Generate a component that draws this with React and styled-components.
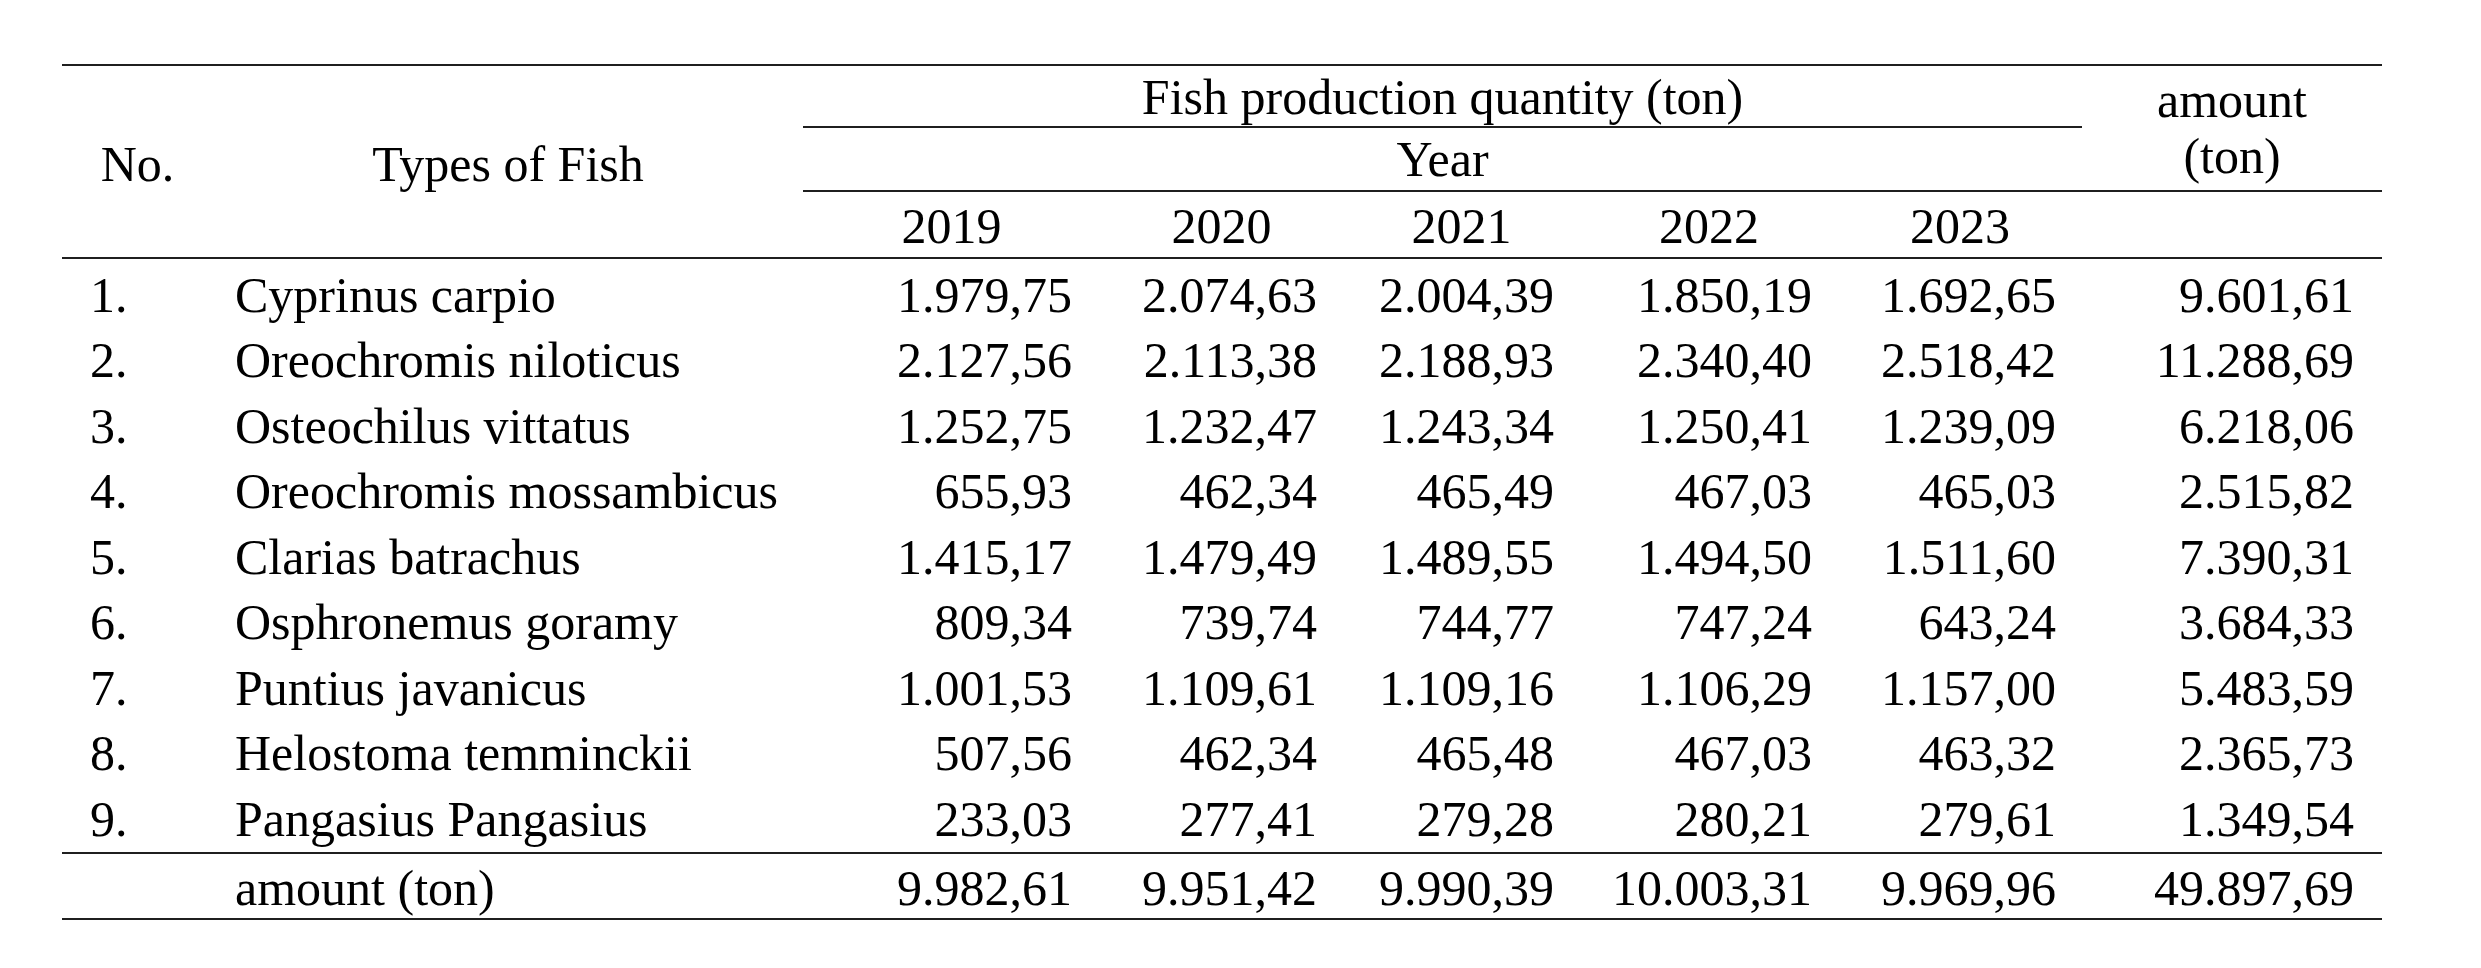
import React from "react";
import styled, { createGlobalStyle } from "styled-components";

const GlobalStyle = createGlobalStyle`
  html, body {
    margin: 0;
    padding: 0;
    background: #ffffff;
  }
  body {
    font-family: "Liberation Serif", "Times New Roman", serif;
    color: #000000;
  }
`;

const Page = styled.div`
  padding: 64px 0 40px 62px;
`;

const Table = styled.table`
  width: 2320px;
  table-layout: fixed;
  border-collapse: separate;
  border-spacing: 0;
  font-family: "Liberation Serif", "Times New Roman", serif;
  font-size: 50px;
  line-height: 56px;
  color: #000;
`;

const HeadRow = styled.tr`
  height: ${(p) => p.$h}px;
`;

const HeadCell = styled.th`
  font-weight: normal;
  text-align: center;
  vertical-align: middle;
  padding: ${(p) => p.$pt || 0}px 0 0 0;
  white-space: nowrap;
  border-top: ${(p) => (p.$top ? "2px solid #1f1f1f" : "none")};
  border-bottom: ${(p) => (p.$bottom ? "2px solid #1f1f1f" : "none")};
`;

const BodyRow = styled.tr`
  height: ${(p) => p.$h}px;
`;

const Cell = styled.td`
  padding: ${(p) => p.$pt || 0}px ${(p) => p.$pr || 0}px 0 ${(p) => p.$pl || 0}px;
  text-align: ${(p) => p.$align || "left"};
  vertical-align: middle;
  white-space: nowrap;
  border-bottom: ${(p) => (p.$bottom ? "2px solid #1f1f1f" : "none")};
`;

const rows = [
  ["1.", "Cyprinus carpio", "1.979,75", "2.074,63", "2.004,39", "1.850,19", "1.692,65", "9.601,61"],
  ["2.", "Oreochromis niloticus", "2.127,56", "2.113,38", "2.188,93", "2.340,40", "2.518,42", "11.288,69"],
  ["3.", "Osteochilus vittatus", "1.252,75", "1.232,47", "1.243,34", "1.250,41", "1.239,09", "6.218,06"],
  ["4.", "Oreochromis mossambicus", "655,93", "462,34", "465,49", "467,03", "465,03", "2.515,82"],
  ["5.", "Clarias batrachus", "1.415,17", "1.479,49", "1.489,55", "1.494,50", "1.511,60", "7.390,31"],
  ["6.", "Osphronemus goramy", "809,34", "739,74", "744,77", "747,24", "643,24", "3.684,33"],
  ["7.", "Puntius javanicus", "1.001,53", "1.109,61", "1.109,16", "1.106,29", "1.157,00", "5.483,59"],
  ["8.", "Helostoma temminckii", "507,56", "462,34", "465,48", "467,03", "463,32", "2.365,73"],
  ["9.", "Pangasius Pangasius", "233,03", "277,41", "279,28", "280,21", "279,61", "1.349,54"],
];

const totals = ["9.982,61", "9.951,42", "9.990,39", "10.003,31", "9.969,96", "49.897,69"];

const widths = [151, 590, 297, 243, 237, 258, 244, 300];
const years = ["2019", "2020", "2021", "2022", "2023"];

function DataRow({ row, first, last }) {
  const pt = first ? 3 : 0;
  return (
    <BodyRow $h={(first ? 68.5 : 65.5) + (last ? 2 : 0)}>
      <Cell $pl={28} $pt={pt} $bottom={last}>{row[0]}</Cell>
      <Cell $pl={22} $pt={pt} $bottom={last}>{row[1]}</Cell>
      {row.slice(2).map((v, i) => (
        <Cell key={i} $align="right" $pr={i === 5 || i === 0 ? 28 : 26} $pt={pt} $bottom={last}>
          {v}
        </Cell>
      ))}
    </BodyRow>
  );
}

export default function App() {
  return (
    <Page>
      <GlobalStyle />
      <Table>
        <colgroup>
          {widths.map((w, i) => (
            <col key={i} style={{ width: w }} />
          ))}
        </colgroup>
        <thead>
          <HeadRow $h={64}>
            <HeadCell rowSpan={3} $top $bottom $pt={5}>No.</HeadCell>
            <HeadCell rowSpan={3} $top $bottom $pt={5}>Types of Fish</HeadCell>
            <HeadCell colSpan={5} $top $bottom $pt={2}>Fish production quantity (ton)</HeadCell>
            <HeadCell rowSpan={2} $top $bottom>
              amount
              <br />
              (ton)
            </HeadCell>
          </HeadRow>
          <HeadRow $h={64}>
            <HeadCell colSpan={5} $bottom>Year</HeadCell>
          </HeadRow>
          <HeadRow $h={67}>
            {years.map((y) => (
              <HeadCell key={y} $bottom $pt={2}>{y}</HeadCell>
            ))}
            <HeadCell $bottom />
          </HeadRow>
        </thead>
        <tbody>
          {rows.map((r, i) => (
            <DataRow key={r[0]} row={r} first={i === 0} last={i === rows.length - 1} />
          ))}
          <BodyRow $h={66}>
            <Cell $bottom $pt={4} />
            <Cell $pl={22} $pt={4} $bottom>amount (ton)</Cell>
            {totals.map((v, i) => (
              <Cell key={i} $align="right" $pr={i === 5 || i === 0 ? 28 : 26} $pt={4} $bottom>
                {v}
              </Cell>
            ))}
          </BodyRow>
        </tbody>
      </Table>
    </Page>
  );
}
